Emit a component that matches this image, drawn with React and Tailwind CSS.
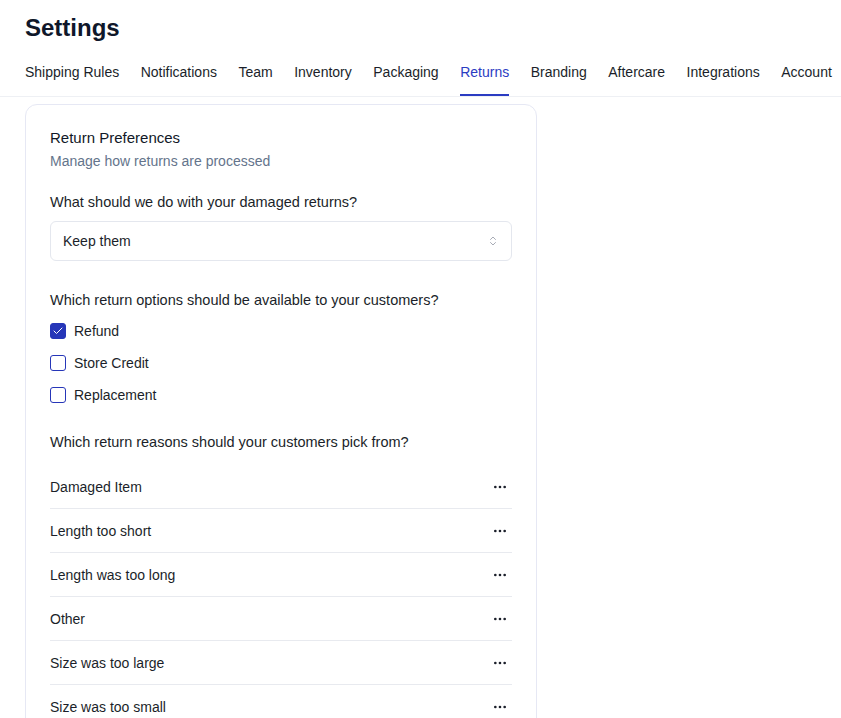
import { useState } from 'react';
import { Check, ChevronsUpDown, MoreHorizontal } from 'lucide-react';

const tabs = [
  'Shipping Rules',
  'Notifications',
  'Team',
  'Inventory',
  'Packaging',
  'Returns',
  'Branding',
  'Aftercare',
  'Integrations',
  'Account',
];

const reasons = [
  'Damaged Item',
  'Length too short',
  'Length was too long',
  'Other',
  'Size was too large',
  'Size was too small',
];

function Checkbox({ checked, label, onChange }) {
  return (
    <label className="flex items-center gap-2 h-8 cursor-pointer">
      <span
        onClick={onChange}
        className={`w-4 h-4 rounded-[3px] border flex items-center justify-center ${
          checked ? 'bg-[#2636b8] border-[#2636b8]' : 'bg-white border-[#2636b8]'
        }`}
      >
        {checked && <Check className="w-3 h-3 text-white" strokeWidth={2} />}
      </span>
      <span className="text-sm font-medium text-[#1b1f2a]">{label}</span>
    </label>
  );
}

export default function App() {
  const [opts, setOpts] = useState({ refund: true, credit: false, replacement: false });

  return (
    <div className="min-h-screen bg-white text-[#111827]" style={{ fontFamily: '"Segoe UI", "Liberation Sans", sans-serif' }}>
      <div className="pl-[25px] pt-3">
        <h1 className="text-2xl font-bold text-[#0f172a]">Settings</h1>
      </div>

      {/* tabs */}
      <div className="mt-[18px] border-b border-[#eef0f4]">
        <nav className="flex gap-[21.5px] pl-[25px]">
          {tabs.map((t) => (
            <button
              key={t}
              className={`pb-3 text-sm leading-5 whitespace-nowrap border-b-2 ${
                t === 'Returns'
                  ? 'text-[#2b3cc2] border-[#2b3cc2]'
                  : 'text-[#1b1f2a] border-transparent'
              }`}
            >
              {t}
            </button>
          ))}
        </nav>
      </div>

      <div className="pl-[25px] pt-[7px]">
        <div className="w-[512px] rounded-xl border border-[#e6e8f4] px-6 pt-[23px] pb-2">
          <h2 className="text-[15px] text-[#111827] leading-5">Return Preferences</h2>
          <p className="mt-[3px] text-sm text-[#64748b]">Manage how returns are processed</p>

          <p className="mt-[21px] text-[14.5px] leading-5 text-[#1b1f2a]">What should we do with your damaged returns?</p>
          <button className="mt-[9px] w-full h-10 rounded-md border border-[#e4e7ee] px-3 flex items-center justify-between text-sm text-[#1b1f2a]">
            Keep them
            <ChevronsUpDown className="w-3 h-3 text-[#8a8f9c]" strokeWidth={1.5} />
          </button>

          <p className="mt-[29px] text-[14.5px] leading-5 text-[#1b1f2a]">Which return options should be available to your customers?</p>
          <div className="mt-[5px] flex flex-col">
            <Checkbox
              label="Refund"
              checked={opts.refund}
              onChange={() => setOpts({ ...opts, refund: !opts.refund })}
            />
            <Checkbox
              label="Store Credit"
              checked={opts.credit}
              onChange={() => setOpts({ ...opts, credit: !opts.credit })}
            />
            <Checkbox
              label="Replacement"
              checked={opts.replacement}
              onChange={() => setOpts({ ...opts, replacement: !opts.replacement })}
            />
          </div>

          <p className="mt-[21px] text-[14.5px] leading-5 text-[#1b1f2a]">Which return reasons should your customers pick from?</p>
          <ul className="mt-[13px]">
            {reasons.map((r, i) => (
              <li
                key={r}
                className={`h-11 flex items-center justify-between text-sm text-[#1b1f2a] ${
                  i < reasons.length - 1 ? 'border-b border-[#e8eaef]' : ''
                }`}
              >
                {r}
                <MoreHorizontal className="w-4 h-4 mr-1 text-[#1b1f2a]" strokeWidth={2} />
              </li>
            ))}
          </ul>
        </div>
      </div>
    </div>
  );
}
